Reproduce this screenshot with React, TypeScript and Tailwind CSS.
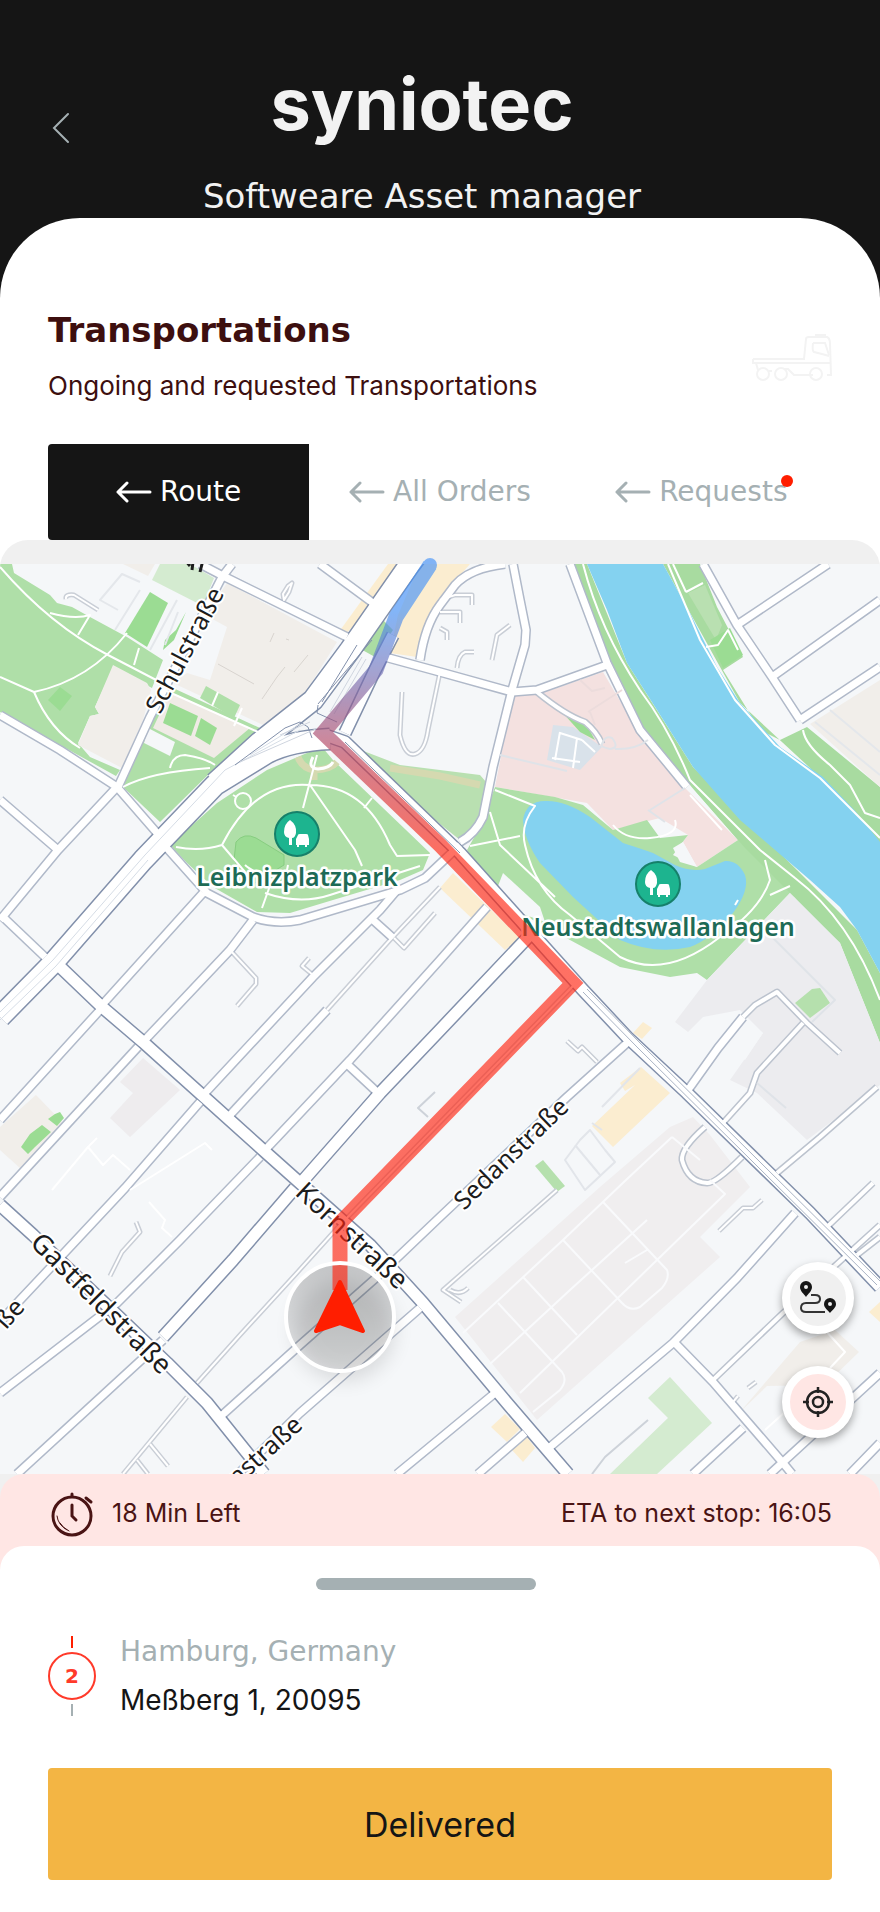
import { FunctionComponent, ReactNode, useState } from 'react'
import clsx from 'clsx'

type RoadKind = 'major' | 'dual' | 'street' | 'lane' | 'path'

interface Road {
  kind: RoadKind
  d: string
}

interface Area {
  fill: string
  points: string
}

interface PlaceProps {
  x: number
  y: number
  name: string
}

const WIDTHS: Record<RoadKind, number> = { major: 20, dual: 11, street: 7, lane: 4, path: 2 }
const CASINGS: Record<RoadKind, string> = {
  major: '#8290ab',
  dual: '#8290ab',
  street: '#b0b9c9',
  lane: '#bcc3ce',
  path: '#c9ced6',
}

const GREEN = '#afdfa8'
const BRIGHT = '#9bdc93'
const PALE = '#d4ebd0'
const BEIGE = '#f1eeea'
const SAND = '#fbedd0'
const WATER = '#84d2f0'
const GROUND = '#f5f7f9'

const areas: Area[] = [
  // parks on the left
  { fill: GREEN, points: '0,564 12,564 14,573 50,595 57,603 72,607 90,617 127,637 163,660 152,688 113,668 95,707 99,714 90,716 78,743 90,757 120,770 116,776 0,712' },
  { fill: BRIGHT, points: '150,592 168,603 147,647 125,633' },
  { fill: PALE, points: '160,564 190,564 214,578 203,606 152,580' },
  { fill: BEIGE, points: '123,564 155,564 148,576' },
  { fill: BEIGE, points: '113,665 147,683 151,690 143,720 122,768 78,745 90,716 99,714 95,707' },
  { fill: BEIGE, points: '227,583 337,642 307,690 277,717 263,725 173,683 187,673 210,680 227,627 205,615' },
  { fill: GREEN, points: '160,682 260,728 277,717 215,768 160,822 123,787 147,727' },
  { fill: '#f0ebe6', points: '170,692 250,728 214,758 153,728' },
  { fill: '#f5f7f9', points: '148,728 175,742 170,756 144,743' },
  { fill: BRIGHT, points: '170,703 198,716 191,736 163,723' },
  { fill: BRIGHT, points: '201,718 217,728 210,745 195,736' },
  { fill: GREEN, points: '206,686 240,705 234,718 200,698' },
  { fill: BRIGHT, points: '186,612 174,640 163,650 165,640 176,630' },
  { fill: BRIGHT, points: '60,687 72,696 60,711 48,700' },
  // central park
  { fill: GREEN, points: '170,845 217,803 267,770 307,753 322,747 333,760 430,853 423,870 400,880 333,900 290,913 257,912 213,887 187,863' },
  { fill: '#b9e0b1', points: '340,742 400,765 480,775 493,790 480,817 472,832 460,840 445,828' },
  { fill: '#abdca3', points: '380,617 393,630 375,657 357,647' },
  { fill: SAND, points: '388,564 402,564 370,608 343,637 336,636' },
  { fill: SAND, points: '420,564 470,564 450,587 436,615 417,657 390,653 398,615' },
  // commercial quarter
  { fill: '#f4e1e0', points: '513,695 537,695 603,672 640,735 685,788 738,840 697,867 683,842 688,835 660,818 640,823 613,830 587,803 495,787' },
  { fill: '#d9e2ea', points: '553,725 573,727 602,747 580,770 547,760' },
  { fill: BRIGHT, points: '562,712 585,722 595,740 580,732' },
  // green belt and river banks
  { fill: GREEN, points: '495,787 555,797 583,805 613,830 647,820 660,838 688,835 673,855 697,867 738,840 690,785 760,850 800,905 840,943 790,893 707,980 697,973 670,977 620,967 520,913 487,883 467,850 480,827' },
  { fill: '#a8dba0', points: '572,564 587,564 627,663 693,767 797,870 857,930 880,973 880,1043 840,943 790,893 745,848 690,785 640,725 607,655' },
  { fill: '#a8dba0', points: '663,564 700,564 717,607 743,657 723,670 760,730 780,740 807,727 880,787 880,845 823,780 740,703' },
  { fill: '#b9e0b1', points: '688,593 705,585 722,625 716,640' },
  { fill: BRIGHT, points: '710,640 730,628 743,655 723,668' },
  { fill: GROUND, points: '503,873 540,907 545,922 520,913 498,886' },
  { fill: GROUND, points: '673,848 683,842 697,867 680,862' },
  { fill: BEIGE, points: '880,680 810,724 880,787' },
  { fill: WATER, points: '587,564 663,564 690,613 717,667 740,703 780,747 823,777 857,813 880,842 880,973 857,930 840,907 810,880 740,820 693,767 657,710 627,663 607,610' },
  // industrial ground
  { fill: '#ececef', points: '790,893 840,943 880,1043 880,1085 807,1140 757,1093 730,1080 763,1033 740,1010 703,1017 688,1032 675,1022 707,980' },
  { fill: GROUND, points: '743,1017 763,1033 745,1060 722,1045' },
  { fill: '#b5e0ad', points: '812,989 820,988 830,1003 810,1018 795,1003' },
  { fill: '#f0eeef', points: '670,1127 693,1117 710,1135 750,1187 700,1237 720,1257 537,1420 455,1317 600,1187' },
  { fill: SAND, points: '440,888 453,873 520,938 505,950' },
  { fill: SAND, points: '633,1033 643,1022 652,1028 642,1039' },
  { fill: SAND, points: '620,1083 641,1067 670,1093 613,1147 592,1126 635,1085 625,1091' },
  { fill: '#b5e0ad', points: '535,1166 543,1160 565,1186 557,1192' },
  { fill: PALE, points: '670,1377 712,1423 657,1474 610,1474 668,1418 648,1398' },
  { fill: SAND, points: '491,1427 505,1414 520,1429 507,1442' },
  { fill: SAND, points: '512,1450 527,1437 535,1448 523,1462' },
  { fill: BEIGE, points: '800,1342 835,1330 859,1352 825,1385 767,1386 740,1412' },
  { fill: SAND, points: '869,1312 880,1302 880,1322' },
  { fill: '#eeecee', points: '143,1058 180,1090 130,1137 110,1118 133,1093 120,1082' },
  { fill: BEIGE, points: '36,1095 63,1123 20,1168 0,1150 0,1127' },
  { fill: BRIGHT, points: '42,1125 51,1132 35,1147 28,1154 21,1147 30,1134' },
  { fill: BRIGHT, points: '55,1114 60,1112 64,1118 57,1126 48,1119' },
]

const roads: Road[] = [
  { kind: 'path', d: 'M327 1010 390 940 440 887' },
  { kind: 'path', d: 'M197 1383 240 1335 295 1275 340 1225 573 986' },
  { kind: 'path', d: 'M187 1397 123 1474M150 1444 168 1466M137 1460 148 1474' },
  { kind: 'path', d: 'M557 1190 443 1290 461 1302M450 1290Q460 1296 468 1288' },
  { kind: 'path', d: 'M136 1222 140 1232 122 1252 110 1276' },
  { kind: 'path', d: 'M230 950 256 978V984L237 1006' },
  { kind: 'path', d: 'M313 975 302 966 309 958' },
  { kind: 'path', d: 'M435 913 404 948 394 938' },
  { kind: 'path', d: 'M98 610 74 595Q65 594 66 599' },
  { kind: 'path', d: 'M284 600 283 594 288 586 292 583 289 592Z' },
  { kind: 'path', d: 'M402 692 400 735Q405 757 415 754 425 751 428 730L440 672' },
  { kind: 'path', d: 'M567 1041 578 1051 582 1047 597 1062' },
  { kind: 'path', d: 'M719 1231 743 1208 753 1208 762 1200' },
  { kind: 'path', d: 'M733 1402 738 1396M748 1388 756 1382' },
  { kind: 'path', d: 'M440 600 455 595H472V605M440 612H460V623M440 628 447 632V640M457 668Q458 655 465 652H474M492 660 497 635 510 625' },
  { kind: 'lane', d: 'M537 692Q565 715 585 722 597 732 602 744' },
  { kind: 'lane', d: 'M743 1017 755 1005 777 992 807 1023 840 1053' },
  { kind: 'lane', d: 'M803 1023 757 1073 750 1093 723 1123' },
  { kind: 'lane', d: 'M877 1087 820 1137 777 1173' },
  { kind: 'lane', d: 'M705 1127 Q681 1148 682 1160 688 1182 707 1183 715 1184 742 1157' },
  { kind: 'lane', d: 'M713 1380 783 1313 880 1225M827 1227 873 1183M857 1255 880 1237' },
  { kind: 'street', d: 'M688 1090 718 1048 743 1017' },
  { kind: 'street', d: 'M200 564 223 576 347 637' },
  { kind: 'street', d: 'M232 564 222 577 150 717 118 787' },
  { kind: 'street', d: 'M320 564 373 603' },
  { kind: 'street', d: 'M0 715 60 750 117 787 157 833' },
  { kind: 'street', d: 'M117 787 58 850 0 920M0 800 58 850' },
  { kind: 'street', d: 'M3 917 45 957' },
  { kind: 'street', d: 'M165 846 207 893 253 917Q275 925 300 920L400 890 425 878 460 845' },
  { kind: 'street', d: 'M513 564 520 600 526 630 525 645 512 690 493 767 483 817Q475 834 460 842' },
  { kind: 'street', d: 'M385 657 440 672 512 692 537 690 607 665' },
  { kind: 'street', d: 'M420 660Q425 625 440 605L455 585Q470 568 505 564' },
  { kind: 'street', d: 'M570 564 607 663 640 730 687 787' },
  { kind: 'street', d: 'M703 564 737 625 772 677 800 720M737 625 828 564M772 677 880 600M800 720 880 667' },
  { kind: 'street', d: 'M102 1005 203 893M143 1042 230 950 253 920' },
  { kind: 'street', d: 'M205 1093 313 977 380 910 397 890M373 920 393 938' },
  { kind: 'street', d: 'M230 1115 327 1010' },
  { kind: 'street', d: 'M267 1148 350 1060 440 960 487 907M348 1065 377 1092' },
  { kind: 'street', d: 'M100 1010 0 1120M138 1047 0 1197' },
  { kind: 'street', d: 'M200 1102 125 1188 67 1250 20 1300 0 1322' },
  { kind: 'street', d: 'M260 1157 180 1240 117 1303 0 1393M163 1340 17 1474' },
  { kind: 'street', d: 'M220 1417 300 1345 377 1277 440 1217 567 1097 627 1043' },
  { kind: 'street', d: 'M420 1308 300 1413 238 1474M495 1393 397 1474M525 1433 478 1474' },
  { kind: 'street', d: 'M550 1447 673 1343 737 1278 795 1213' },
  { kind: 'street', d: 'M675 1343 713 1382 783 1463 792 1474M743 1428 693 1474' },
  { kind: 'street', d: 'M770 1474 880 1373M850 1474 880 1443' },
  { kind: 'dual', d: 'M300 1184 380 1093 440 1030 530 935' },
  { kind: 'dual', d: 'M55 962 102 1007 143 1042 263 1150 300 1183 370 1245 423 1303 507 1403 568 1474' },
  { kind: 'dual', d: 'M0 1205 33 1235 167 1363 207 1403 264 1474' },
  { kind: 'dual', d: 'M295 1188 233 1260 163 1337' },
  { kind: 'dual', d: 'M325 735 345 742 460 853 583 990 627 1037 687 1093 810 1213 880 1287' },
  { kind: 'dual', d: 'M393 635 375 670 345 733' },
  { kind: 'major', d: 'M0 1017 53 963 143 860 215 785 267 753Q290 741 330 739' },
  { kind: 'major', d: 'M215 783 260 742 313 700 350 650 410 564 425 544' },
]

// hairlines drawn over the fills: footpaths, tram tracks, plot borders
const hairlines: { stroke: string; width: number; d: string }[] = [
  { stroke: '#ffffff', width: 2, d: 'M0 567Q50 625 108 655L160 682M0 677 34 692Q90 680 127 633M34 692Q50 730 80 748M50 613Q75 620 90 615L78 635M139 648 134 665M123 787Q150 772 210 768M170 768Q173 755 185 755 205 758 215 765M160 688 258 732M218 692 212 706M242 708 234 726' },
  { stroke: '#ffffff', width: 2, d: 'M317 755 303 808M310 785 355 850 362 866M222 845Q255 780 310 785 365 785 390 845L397 856 430 855M176 847Q200 852 222 845L245 872M272 880 262 908M272 880Q250 870 245 865M265 893Q300 905 330 895L420 866M233 795 243 801M372 798 364 808M288 865 285 880' },
  { stroke: '#ffffff', width: 2, d: 'M583 564Q600 630 640 690 670 730 690 780L760 850 795 878Q850 920 880 1000M495 790 535 806Q520 825 525 845 535 890 570 915L620 957Q665 980 720 937 760 910 770 880L765 860M470 846 520 836M490 812 500 845 555 897M770 895 790 886M613 825Q625 840 650 838 680 835 675 820' },
  { stroke: '#ffffff', width: 2, d: 'M668 564 700 640 735 700 775 745 820 778 880 838M803 730Q805 745 830 765L850 785 865 813 880 818M686 592 703 583M706 647 718 645 728 630 738 650M673 564 686 592' },
  { stroke: '#f9fafc', width: 2, d: 'M463 1333 563 1240 626 1180 672 1137M603 1202 667 1270Q670 1278 662 1288L640 1307Q630 1312 622 1303L563 1240M523 1277 577 1335M498 1303 562 1372Q568 1380 560 1390L533 1412M490 1364 570 1290 647 1220M520 1393 725 1194 710 1180M672 1137 700 1160M625 1263 647 1250' },
  { stroke: '#ffffff', width: 2, d: 'M560 733 582 740M555 760 560 732M573 768 577 738M595 752 582 740M552 758 580 762' },
  { stroke: '#ecdcdc', width: 2, d: 'M580 680 592 691 605 688M588 712 622 690M590 712 595 725' },
  { stroke: '#dfe3e8', width: 2, d: 'M500 755 567 771M602 744Q605 735 612 738 620 748 610 749 600 747 602 744M615 749Q635 750 648 740M650 810 685 788M648 810 665 822M770 935 815 980 835 1000 812 1022M757 1083 786 1108' },
  { stroke: '#e4e7eb', width: 2, d: 'M118 610 100 600 122 574 140 582M177 600 150 650M140 590 115 630M178 612 165 645M815 722 880 775M830 710 880 752' },
  { stroke: '#ffffff', width: 2, d: 'M52 1190 88 1147 103 1165 113 1155 130 1170M97 1138 88 1147M149 1202 165 1220 162 1228 172 1237M130 1190 205 1143 212 1150' },
  { stroke: '#e2e5ea', width: 2, d: 'M565 1160 580 1140 590 1130 605 1150 615 1162 585 1190ZM575 1145 600 1175M592 1123 602 1130M640 1068 602 1107' },
  { stroke: '#cdd2d9', width: 2, d: 'M648 1420 605 1457 592 1474M435 1092 418 1108 428 1117' },
  { stroke: '#d6dde6', width: 1, d: 'M0 1012 53 960 145 855 225 770 300 730M0 1020 56 966 148 860M250 755 300 724' },
  { stroke: '#aab4c4', width: 1, d: 'M587 989 640 1043 880 1281M583 992 637 1047 877 1285' },
  { stroke: '#8290ab', width: 1, d: 'M235 765 285 728 300 722 308 727 312 738M318 705 317 713 337 722M345 742 460 853M318 704 372 640M357 645 322 702' },
  { stroke: '#cfd5df', width: 1, d: 'M362 657 330 712M366 659 334 714M280 735 310 722M240 762 318 728' },
  { stroke: '#ffffff', width: 2, d: 'M690 795 722 830M735 905 738 900M825 1330 845 1352 830 1368M765 1430 785 1412' },
]

const tabs = ['Route', 'All Orders', 'Requests']

const ArrowLeft: FunctionComponent = () => (
  <svg className="h-6 w-9 shrink-0" viewBox="0 0 36 24" fill="none" stroke="currentColor" strokeWidth="3" strokeLinecap="round" strokeLinejoin="round">
    <path d="M34 12H2M11 3 2 12l9 9" />
  </svg>
)

const TruckIcon: FunctionComponent = () => (
  <svg className="mt-1 h-12 w-20" viewBox="0 0 80 48" fill="none" stroke="#f3f3f3" strokeWidth="2">
    <path d="M1 25H52L54 5Q54 3 57 3H75Q78 4 78 10L79 41H75M61 41H42L36 35H32M17 37H20M6 36 4 29H52M1 25V29H5M52 29H79" />
    <path d="M61 9H73L77 21M61 9Q60 17 62 18L70 20 77 22M64 3V1H73V3" />
    <circle cx="11" cy="40" r="6" />
    <circle cx="29" cy="40" r="6" />
    <circle cx="64" cy="40" r="6" />
  </svg>
)

const TimerIcon: FunctionComponent = () => (
  <svg className="h-12 w-12" viewBox="0 0 48 48" fill="none" stroke="#4a1414" strokeLinecap="round">
    <circle cx="24" cy="26" r="19" strokeWidth="3" />
    <path d="M24 15V26L28 30" strokeWidth="3" />
    <path d="M24 4V6" strokeWidth="3" />
    <path d="M38 8l5 4" strokeWidth="3" />
    <path d="M9 26Q10 35 19 40M12 33Q15 38 21 41" strokeWidth="1" />
  </svg>
)

const RouteIcon: FunctionComponent = () => (
  <svg className="h-9 w-10" viewBox="0 0 40 36" fill="none">
    <path d="M13 15H17Q22 15 22 19 22 23 17 23H8Q3 23 3 28 3 32 8 32H27" stroke="#333" strokeWidth="2" />
    <path fill="#151515" fillRule="evenodd" d="M8 1a6 6 0 0 1 6 6c0 4-4 7-6 10C6 14 2 11 2 7a6 6 0 0 1 6-6Zm0 4a2 2 0 1 0 0 4 2 2 0 0 0 0-4Z" />
    <path fill="#151515" fillRule="evenodd" d="M32 18a6 6 0 0 1 6 6c0 4-4 6-6 9-2-3-6-5-6-9a6 6 0 0 1 6-6Zm0 4a2 2 0 1 0 0 4 2 2 0 0 0 0-4Z" />
  </svg>
)

const TargetIcon: FunctionComponent = () => (
  <svg className="h-8 w-8" viewBox="0 0 32 32" fill="none" stroke="#222" strokeWidth="2.5">
    <circle cx="16" cy="16" r="11" />
    <circle cx="16" cy="16" r="5" />
    <path d="M16 1V7M16 25V31M1 16H7M25 16H31" />
  </svg>
)

const Place: FunctionComponent<PlaceProps> = ({ x, y, name }) => (
  <g>
    <circle cx={x} cy={y} r="22" fill="#1db48f" stroke="#16806a" strokeWidth="2" />
    <g fill="#fff">
      <path d={`M${x - 7} ${y - 14}q7 5 6 13-1 5-4 5v7h-3v-7q-5-1-5-6 0-8 6-12Z`} />
      <path d={`M${x - 1} ${y + 5}l2-4q0-1 2-1h6q2 0 2 1l1 4v6h-2v2h-2v-2h-6v2h-2v-2h-1Z`} />
    </g>
    <text
      x={x}
      y={y + 52}
      textAnchor="middle"
      fontSize="25"
      fontWeight="600"
      fill="#1d6b56"
      stroke="#fff"
      strokeWidth="5"
      strokeLinejoin="round"
      paintOrder="stroke"
    >
      {name}
    </text>
  </g>
)

interface StreetNameProps {
  x: number
  y: number
  angle: number
  size?: number
  anchor?: 'start' | 'end'
  children: ReactNode
}

const StreetName: FunctionComponent<StreetNameProps> = ({ x, y, angle, size = 25, anchor = 'start', children }) => (
  <text
    x={x}
    y={y}
    transform={`rotate(${angle} ${x} ${y})`}
    textAnchor={anchor}
    fontSize={size}
    fill="#1c1c1c"
    stroke="#fff"
    strokeWidth="4"
    strokeLinejoin="round"
    paintOrder="stroke"
  >
    {children}
  </text>
)

const CityMap: FunctionComponent = () => (
  <svg className="block h-auto w-full" viewBox="0 540 880 934" fontFamily="'Noto Sans', sans-serif">
    <defs>
      <clipPath id="mapArea">
        <rect x="0" y="564" width="880" height="910" />
      </clipPath>
      <linearGradient id="routeColor" gradientUnits="userSpaceOnUse" x1="400" y1="610" x2="400" y2="850">
        <stop offset="0" stopColor="#4593f7" />
        <stop offset="0.3" stopColor="#7a6cae" />
        <stop offset="0.6" stopColor="#bd4158" />
        <stop offset="1" stopColor="#ff2410" />
      </linearGradient>
      <linearGradient id="haloColor" x1="0" y1="0" x2="0" y2="1">
        <stop offset="0" stopColor="#000" stopOpacity="0.2" />
        <stop offset="1" stopColor="#000" stopOpacity="0.04" />
      </linearGradient>
      <filter id="soft" x="-50%" y="-50%" width="200%" height="200%">
        <feGaussianBlur stdDeviation="10" />
      </filter>
    </defs>
    <g clipPath="url(#mapArea)">
      <rect x="0" y="564" width="880" height="910" fill={GROUND} />
      {areas.map((area, id) => (
        <polygon key={id} points={area.points} fill={area.fill} />
      ))}
      <path
        fill={WATER}
        d="M523 820Q526 801 545 801 565 800 590 817L623 843Q645 850 653 853L675 865Q690 872 705 869L725 861Q738 860 745 875 750 890 733 913 710 940 690 947 655 955 620 940L573 897 540 863Q524 840 523 820Z"
      />
      <path fill="none" stroke="#d5d9b0" strokeWidth="7" d="M298 757Q302 768 314 770V780M314 770Q330 770 337 762M390 768 440 776 480 785" />
      <path fill="#9bdc93" stroke="#87cd80" d="M236 842Q244 832 256 838L284 855V865L250 886 234 860Z" />
      <g fill="none" strokeLinejoin="round">
        {roads.map((road, id) => (
          <path key={id} d={road.d} stroke={CASINGS[road.kind]} strokeWidth={WIDTHS[road.kind] + 3} />
        ))}
        {roads.map((road, id) => (
          <path key={id} d={road.d} stroke="#fff" strokeWidth={WIDTHS[road.kind]} />
        ))}
        {hairlines.map((line, id) => (
          <path key={id} d={line.d} stroke={line.stroke} strokeWidth={line.width} />
        ))}
        <path d="M313 757Q307 768 318 769 330 768 333 762" stroke="#fff" strokeWidth="3" />
        <circle cx="243" cy="801" r="8" stroke="#fff" strokeWidth="2" fill={GREEN} />
        <path d="M185 560l5 6M193 562l-1 8M203 560l-3 12" stroke="#1c1c1c" strokeWidth="3" />
        <path d="M270 642l4-9M286 639l3 1M218 664l36 20M262 699l15-22 8-10M294 672l14-17" stroke="#d8d4cf" />
      </g>
      <StreetName x={160} y={715} angle={-62}>Schulstraße</StreetName>
      <StreetName x={294} y={1194} angle={43} size={27}>Kornstraße</StreetName>
      <StreetName x={29} y={1244} angle={45} size={27}>Gastfeldstraße</StreetName>
      <StreetName x={464} y={1211} angle={-44}>Sedanstraße</StreetName>
      <StreetName x={304} y={1427} angle={-42} anchor="end">nstraße</StreetName>
      <StreetName x={26} y={1308} angle={-48} anchor="end">ße</StreetName>
      <Place x={297} y={834} name="Leibnizplatzpark" />
      <Place x={658} y={884} name="Neustadtswallanlagen" />
    </g>
    <circle cx="344" cy="1330" r="50" fill="#000" opacity="0.12" filter="url(#soft)" />
    <circle cx="340" cy="1317" r="54" fill="url(#haloColor)" />
    <g fill="none" stroke="url(#routeColor)" opacity="0.65">
      <path strokeWidth="15" d="M430 565 396 617 376 670 323 733 440 845 573 983 340 1223V1290" />
      <circle cx="430" cy="565" r="7" fill="#4593f7" stroke="none" />
    </g>
    <circle cx="340" cy="1317" r="54" fill="none" stroke="#fff" strokeWidth="4" />
    <path d="M340 1282 363 1331 340 1323 316 1331Z" fill="#ff1e00" stroke="#ff1e00" strokeWidth="4" strokeLinejoin="round" />
  </svg>
)

const App: FunctionComponent = () => {
  const [currentTab, setCurrentTab] = useState<string>('Route')

  return (
    <div className="min-h-screen w-full bg-[#151515] font-['Inter',sans-serif]">
      <header className="relative flex flex-col items-center pt-[68px] pr-9 pb-0.5 text-[#f2f2f2]">
        <button aria-label="Back" className="absolute top-27 left-12 p-1 text-[#a5b0b3]">
          <svg className="h-8 w-5" viewBox="0 0 20 32" fill="none" stroke="currentColor" strokeWidth="2" strokeLinecap="round">
            <path d="M16 2 2 16 16 30" />
          </svg>
        </button>
        <div className="text-[72px] leading-[72px] font-bold">syniotec</div>
        <p className="mt-9 font-['DejaVu_Sans',sans-serif] text-[34px] leading-10">Softweare Asset manager</p>
      </header>

      <main className="rounded-t-[80px] bg-white pt-[92px]">
        <div className="flex items-center justify-between px-12 text-[#3d0f0f]">
          <div>
            <h1 className="font-['DejaVu_Sans',sans-serif] text-[34px] leading-10 font-bold">Transportations</h1>
            <p className="mt-5 text-[26px] leading-8">Ongoing and requested Transportations</p>
          </div>
          <TruckIcon />
        </div>

        <nav className="mt-[42px] grid grid-cols-3 px-12">
          {tabs.map((tab) => (
            <button
              key={tab}
              onClick={() => setCurrentTab(tab)}
              className={clsx(
                "flex h-24 items-center justify-center gap-2 rounded-l-sm font-['DejaVu_Sans',sans-serif] text-[28px]",
                currentTab === tab ? 'bg-[#151515] text-white' : 'text-[#a5b0b3]'
              )}
            >
              <ArrowLeft />
              <span className="relative">
                {tab}
                {tab === 'Requests' && <span className="absolute top-1 -right-1.5 h-3 w-3 rounded-full bg-[#ff1e00]" />}
              </span>
            </button>
          ))}
        </nav>

        <section className="relative overflow-hidden rounded-t-[28px] bg-[#f0f0f0]">
          <CityMap />
          <div className="absolute right-[26px] bottom-9 flex flex-col gap-8">
            <button aria-label="Show route" className="flex h-[72px] w-[72px] items-center justify-center rounded-full border-8 border-white bg-[#f0f0f0] shadow-[0_4px_8px_rgba(0,0,0,0.35)]">
              <RouteIcon />
            </button>
            <button aria-label="Locate me" className="flex h-[72px] w-[72px] items-center justify-center rounded-full border-8 border-white bg-[#ffe6e4] shadow-[0_4px_8px_rgba(0,0,0,0.35)]">
              <TargetIcon />
            </button>
          </div>
        </section>

        <section className="bg-[#f0f0f0]">
          <div className="rounded-t-3xl bg-[#ffe6e4]">
            <div className="flex h-[72px] items-center justify-between px-12 pt-2 text-[25px] text-[#4a1414]">
              <div className="flex items-center gap-4">
                <TimerIcon />
                <span>18 Min Left</span>
              </div>
              <span>ETA to next stop: 16:05</span>
            </div>

            <div className="rounded-t-3xl bg-white px-12 pt-8 pb-8">
              <div className="flex justify-center pr-7">
                <div className="h-3 w-[220px] rounded-full bg-[#a5b0b3]" />
              </div>
              <div className="mt-11 flex items-center gap-6">
                <div className="flex flex-col items-center gap-1">
                  <div className="h-3 w-0.5 bg-[#ff1e00]" />
                  <div className="flex h-12 w-12 items-center justify-center rounded-full border-2 border-[#ff3a2a] font-['DejaVu_Sans',sans-serif] text-xl font-bold text-[#ff3a2a]">
                    2
                  </div>
                  <div className="h-3 w-0.5 bg-[#a5b0b3]" />
                </div>
                <div>
                  <p className="font-['DejaVu_Sans',sans-serif] text-[28px] leading-9 text-[#a5b0b3]">Hamburg, Germany</p>
                  <p className="mt-3 text-[28px] leading-9 text-[#151515]">Meßberg 1, 20095</p>
                </div>
              </div>
              <button className="mt-[50px] h-28 w-full rounded-sm bg-[#f3b544] text-[34px] text-[#151515]">Delivered</button>
            </div>
          </div>
        </section>
      </main>
    </div>
  )
}

export default App
